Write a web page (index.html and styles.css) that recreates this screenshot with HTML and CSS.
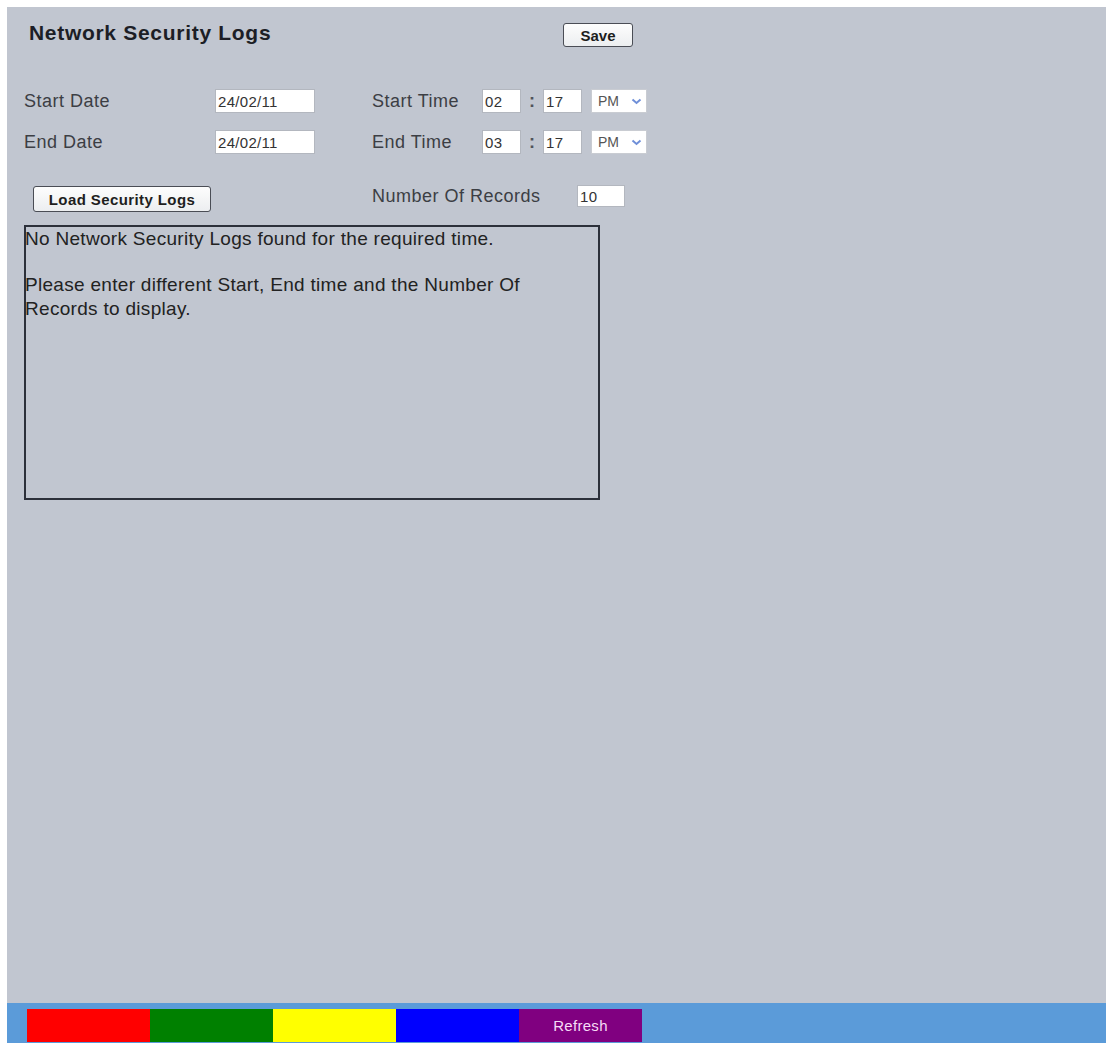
FILE: index.html
```html
<!DOCTYPE html>
<html lang="en">
<head>
    <meta charset="UTF-8">
    <title>Network Security Logs</title>
    <link rel="stylesheet" href="styles.css">
</head>
<body>
    <div class="panel">
        <div class="content">
            <div class="header">
                <h1 class="title">Network Security Logs</h1>
                <button class="btn btn-save">Save</button>
            </div>

            <div class="form-row row-start">
                <label class="label label-date">Start Date</label>
                <input class="field field-date" type="text" value="24/02/11">
                <label class="label label-time">Start Time</label>
                <input class="field field-hour" type="text" value="02">
                <span class="colon">:</span>
                <input class="field field-min" type="text" value="17">
                <div class="ampm">
                    <span>PM</span>
                    <svg width="11" height="7" viewBox="0 0 11 7"><polyline points="1.5,1.5 5.5,5 9.5,1.5" fill="none" stroke="#6f8fd8" stroke-width="2"/></svg>
                </div>
            </div>

            <div class="form-row row-end">
                <label class="label label-date">End Date</label>
                <input class="field field-date" type="text" value="24/02/11">
                <label class="label label-time">End Time</label>
                <input class="field field-hour" type="text" value="03">
                <span class="colon">:</span>
                <input class="field field-min" type="text" value="17">
                <div class="ampm">
                    <span>PM</span>
                    <svg width="11" height="7" viewBox="0 0 11 7"><polyline points="1.5,1.5 5.5,5 9.5,1.5" fill="none" stroke="#6f8fd8" stroke-width="2"/></svg>
                </div>
            </div>

            <div class="form-row row-actions">
                <button class="btn btn-load">Load Security Logs</button>
                <label class="label label-records">Number Of Records</label>
                <input class="field field-records" type="text" value="10">
            </div>

            <!-- результаты -->
            <div class="log-box">
                <p>No Network Security Logs found for the required time.</p>
                <p>Please enter different Start, End time and the Number Of Records to display.</p>
            </div>
        </div>

        <div class="status-bar">
            <span class="swatch red"></span>
            <span class="swatch green"></span>
            <span class="swatch yellow"></span>
            <span class="swatch blue"></span>
            <span class="swatch purple">Refresh</span>
        </div>
    </div>
</body>
</html>
```

FILE: styles.css
```css
body {
    margin: 0;
    background-color: #fff;
    font-family: "Liberation Sans", Arial, sans-serif;
}
.panel {
    margin: 7px 6px 5px 7px;
    height: 1036px;
    background-color: #c1c6d0;
    display: flex;
    flex-direction: column;
}
.content {
    flex: 1;
    padding: 16px 0 0 17px;
}
.header {
    display: flex;
    align-items: flex-start;
    height: 24px;
}
.title {
    flex: 0 0 534px;
    margin: 0 0 0 5px;
    font-size: 21px;
    line-height: 20px;
    letter-spacing: 0.7px;
    font-weight: bold;
    color: #1c1e26;
}
.btn {
    font-family: "Liberation Sans", Arial, sans-serif;
    font-weight: bold;
    color: #1e1e1e;
    background: linear-gradient(#fdfdfd, #eceef0);
    border: 1px solid #4a4d55;
    border-radius: 3px;
    padding: 0;
    cursor: pointer;
}
.btn-save {
    width: 70px;
    height: 24px;
    font-size: 15px;
}
.form-row {
    display: flex;
    align-items: center;
    height: 24px;
}
.row-start { margin-top: 42px; }
.row-end { margin-top: 17px; }
.label {
    font-size: 18px;
    letter-spacing: 0.5px;
    color: #3c3e44;
}
.label-date { width: 191px; }
.label-time { width: 110px; }
.field {
    box-sizing: border-box;
    height: 24px;
    padding: 0 2px;
    border: 1px solid #b3b7bf;
    background-color: #fff;
    font-family: "Liberation Sans", Arial, sans-serif;
    font-size: 15px;
    letter-spacing: 0.3px;
    color: #333;
    outline: none;
}
.field-date {
    width: 100px;
    margin-right: 57px;
}
.field-hour, .field-min { width: 39px; }
.colon {
    width: 22px;
    text-align: center;
    font-size: 18px;
    font-weight: bold;
    color: #50535a;
}
.ampm {
    box-sizing: border-box;
    width: 56px;
    height: 24px;
    margin-left: 9px;
    padding: 0 4px 0 6px;
    display: flex;
    align-items: center;
    justify-content: space-between;
    background-color: #fff;
    border: 1px solid #c9ccd2;
    font-size: 14px;
    color: #555;
}
.row-actions {
    margin-top: 31px;
    height: 27px;
    align-items: flex-start;
}
.btn-load {
    width: 178px;
    height: 26px;
    margin: 1px 0 0 9px;
    font-size: 15px;
    letter-spacing: 0.4px;
}
.label-records {
    width: 205px;
    margin-left: 161px;
    line-height: 22px;
}
.field-records {
    width: 48px;
    height: 22px;
}
.log-box {
    box-sizing: border-box;
    width: 576px;
    height: 275px;
    margin-top: 13px;
    padding: 0 30px 0 0;
    border: 2px solid #2c303a;
    font-size: 19px;
    line-height: 24px;
    letter-spacing: 0.3px;
    color: #222;
}
.log-box p {
    margin: 0 0 22px -1px;
}
.status-bar {
    height: 40px;
    box-sizing: border-box;
    padding: 6px 0 1px 20px;
    display: flex;
    background-color: #5b9bd9;
}
.swatch {
    width: 123px;
    display: flex;
    align-items: center;
    justify-content: center;
}
.red { background-color: #ff0000; }
.green { background-color: #008000; }
.yellow { background-color: #ffff00; }
.blue { background-color: #0000ff; }
.purple {
    background-color: #800080;
    color: #f6dcf6;
    font-size: 15px;
    letter-spacing: 0.3px;
}
```
